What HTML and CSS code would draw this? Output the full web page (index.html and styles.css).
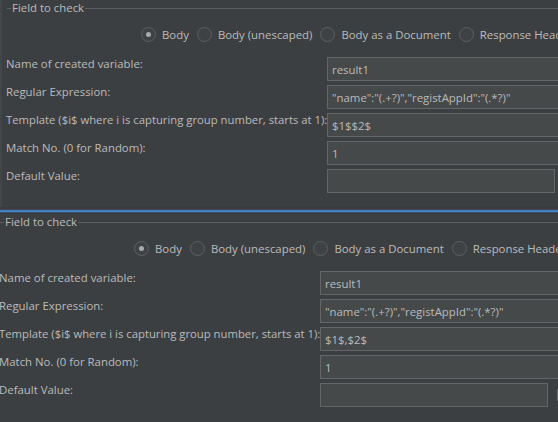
FILE: index.html
```html
<!DOCTYPE html>
<html>
<head>
<meta charset="utf-8">
<link rel="stylesheet" href="styles.css">
</head>
<body>
<div class="page">
  <section class="panel panel-top">
    <div class="legend"><span class="legend-line lead"></span><span class="legend-text">Field to check</span><span class="legend-line fill"></span></div>
    <div class="radios">
      <label class="radio"><span class="circle on"></span><span class="rtext">Body</span></label>
      <label class="radio"><span class="circle"></span><span class="rtext">Body (unescaped)</span></label>
      <label class="radio"><span class="circle"></span><span class="rtext">Body as a Document</span></label>
      <label class="radio"><span class="circle"></span><span class="rtext">Response Headers</span></label>
    </div>
    <div class="form">
      <div class="lbl">Name of created variable:</div><div class="field wide">result1</div>
      <div class="lbl">Regular Expression:</div><div class="field wide">"name":"(.+?)","registAppId":"(.*?)"</div>
      <div class="lbl tmpl">Template ($i$ where i is capturing group number, starts at 1):</div><div class="field wide">$1$$2$</div>
      <div class="lbl">Match No. (0 for Random):</div><div class="field wide">1</div>
      <div class="lbl">Default Value:</div><div class="fieldrow"><div class="field short"></div><span class="check"></span></div>
    </div>
  </section>
  <div class="sep"></div>
  <section class="panel panel-bottom">
    <div class="legend"><span class="legend-line lead"></span><span class="legend-text">Field to check</span><span class="legend-line fill"></span></div>
    <div class="radios">
      <label class="radio"><span class="circle on"></span><span class="rtext">Body</span></label>
      <label class="radio"><span class="circle"></span><span class="rtext">Body (unescaped)</span></label>
      <label class="radio"><span class="circle"></span><span class="rtext">Body as a Document</span></label>
      <label class="radio"><span class="circle"></span><span class="rtext">Response Headers</span></label>
    </div>
    <div class="form">
      <div class="lbl">Name of created variable:</div><div class="field wide">result1</div>
      <div class="lbl">Regular Expression:</div><div class="field wide">"name":"(.+?)","registAppId":"(.*?)"</div>
      <div class="lbl tmpl">Template ($i$ where i is capturing group number, starts at 1):</div><div class="field wide">$1$,$2$</div>
      <div class="lbl">Match No. (0 for Random):</div><div class="field wide">1</div>
      <div class="lbl">Default Value:</div><div class="fieldrow"><div class="field short"></div><span class="check"></span></div>
    </div>
  </section>
</div>
</body>
</html>
```
FILE: styles.css
```css
html, body {
  margin: 0;
  padding: 0;
  background: #3c3f41;
  overflow: hidden;
}
body {
  width: 558px;
  height: 422px;
  font-family: "Open Sans", "Noto Sans", sans-serif;
  font-size: 11.4px;
  color: #bbbbbb;
}
.page {
  width: 558px;
  height: 422px;
  overflow: hidden;
}
.panel {
  height: 207px;
  box-sizing: border-box;
  width: 700px;
}
.panel-top {
  margin-left: 0;
  border-left: 2px solid #434648;
  padding-left: 0;
}
.panel-top .legend { margin-left: 5px; }
.panel-top .radios { padding-left: 139px; }
.panel-top .form { margin-left: 4px; }
.panel-bottom {
  margin-left: -7px;
  height: 208px;
}
.panel-bottom .legend { margin-left: 7px; }
.panel-bottom .radios { padding-left: 141px; }
.panel-bottom .form { margin-left: 6px; }

.legend {
  display: flex;
  height: 16px;
  line-height: 16px;
}
.legend-line {
  height: 1px;
  background: #5b5e60;
  margin-top: 8px;
}
.legend-line.lead { width: 4px; }
.legend-line.fill { flex: 1; }
.legend-text {
  padding: 0 1px;
  white-space: nowrap;
}
.radios {
  display: flex;
  margin-top: 11px;
  height: 15px;
  line-height: 15px;
  white-space: nowrap;
}
.radio {
  display: flex;
  align-items: center;
  margin-right: 8px;
}
.circle {
  width: 13px;
  height: 13px;
  border-radius: 50%;
  border: 1px solid #5d6061;
  background: #3f4244;
  margin-right: 6px;
  position: relative;
  flex: none;
}
.circle.on::after {
  content: "";
  position: absolute;
  left: 4px;
  top: 4px;
  width: 5px;
  height: 5px;
  border-radius: 50%;
  background: #a9a9a9;
}
.form {
  margin-top: 15px;
  display: grid;
  grid-template-columns: 321px 1fr;
  row-gap: 4px;
}
.lbl {
  line-height: 13px;
  white-space: nowrap;
  align-self: start;
}
.lbl.tmpl {
  font-size: 11.3px;
}
.field {
  height: 22px;
  line-height: 23px;
  border: 1px solid #646566;
  background: #45494a;
  padding: 0 4px;
  white-space: nowrap;
  overflow: hidden;
}
.fieldrow {
  display: flex;
  align-items: center;
}
.field.short {
  width: 218px;
  flex: none;
}
.check {
  width: 12px;
  height: 12px;
  margin-left: 9px;
  border: 1px solid #6b6d6e;
  border-radius: 2px;
  background: #43474a;
  flex: none;
}
.sep {
  height: 7px;
  background: linear-gradient(to bottom,
    #393c3e 0px, #393c3e 2px,
    #3d4c5c 2px, #3d4c5c 3px,
    #4677b3 3px, #4677b3 4px,
    #4a88c7 4px, #4a88c7 5px,
    #36506a 5px, #36506a 6px,
    #36393b 6px, #36393b 7px);
}
```
